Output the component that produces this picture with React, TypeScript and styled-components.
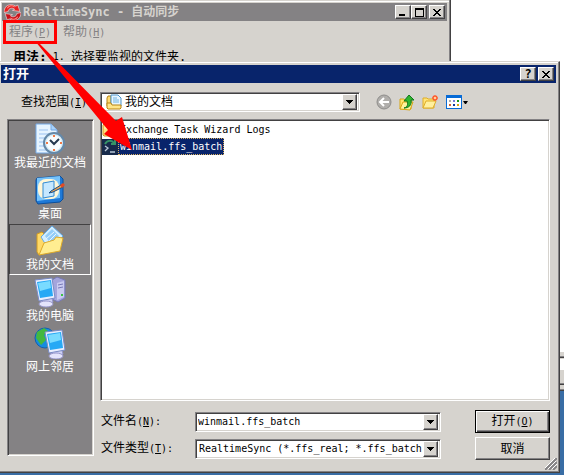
import React from "react";
import styled, { createGlobalStyle, css } from "styled-components";

const face = "#d6d3ce";
const navy = "#08246b";
const grey = "#848284";
const dark = "#424142";

const GlobalStyle = createGlobalStyle`
  * { box-sizing: border-box; }
  body {
    margin: 0;
    background: #fff;
    color: #000;
    font: 12px/16px "DejaVu Sans Mono", "Noto Sans CJK SC", monospace;
  }
  button, input, select {
    font: inherit;
    color: inherit;
    margin: 0;
    padding: 0;
    border: 0;
    border-radius: 0;
    background: none;
  }
`;

const raised = css`
  border: 1px solid;
  border-color: #fff ${dark} ${dark} #fff;
  box-shadow: inset -1px -1px 0 ${grey};
  background: ${face};
`;

const sunken = css`
  border: 1px solid;
  border-color: ${grey} #fff #fff ${grey};
  box-shadow: inset 1px 1px 0 ${dark}, inset -1px -1px 0 ${face};
  background: #fff;
`;

const Desktop = styled.div`
  position: relative;
  min-height: 100vh;
  padding: 61px 4px 2px 0;
  overflow: hidden;
  background: linear-gradient(#fff 391px, #396da5 391px);
`;

const BackPanes = styled.div`
  position: absolute;
  top: 352px;
  right: 0;
  width: 40px;
`;

const Pane = styled.div<{ $h: number; $fill: string }>`
  height: ${(p) => p.$h}px;
  background: ${(p) => p.$fill};
  border-top: 1px solid ${face};
  border-bottom: 1px solid ${dark};
  box-shadow: inset 0 -1px 0 ${grey};
`;

const MainWindow = styled.section`
  position: absolute;
  top: 0;
  left: 0;
  width: 80%;
  height: 120px;
  padding: 3px 3px 3px 2px;
  background: ${face};
  border-right: 1px solid ${dark};
  box-shadow: inset -1px 0 0 ${grey}, inset 0 1px 0 ${face}, inset 1px 2px 0 #fff;
`;

const Dialog = styled.section`
  position: relative;
  padding: 3px 3px 12px 1px;
  background: ${face};
  border: solid;
  border-width: 1px 1px 1px 0;
  border-color: ${face} ${dark} ${dark};
  box-shadow: inset -1px -1px 0 ${grey}, inset 0 1px 0 #fff;
`;

const TitleBar = styled.header<{ $active?: boolean }>`
  display: flex;
  align-items: center;
  gap: 2px;
  height: 18px;
  padding: 0 2px;
  background: ${(p) => (p.$active ? navy : grey)};
  color: ${(p) => (p.$active ? "#fff" : face)};
`;

const Title = styled.h1<{ $large?: boolean }>`
  flex: 1;
  margin: 0;
  font-size: ${(p) => (p.$large ? 13 : 12)}px;
  line-height: 18px;
  font-weight: bold;
  white-space: nowrap;
`;

const CaptionGroup = styled.div`
  display: flex;
`;

const CaptionButton = styled.button`
  ${raised}
  display: grid;
  place-items: center;
  width: 16px;
  height: 14px;
  line-height: 12px;
  color: #000;
`;

const MenuBar = styled.nav`
  display: flex;
  align-items: center;
  height: 22px;
  margin-left: 1px;
  color: ${grey};
`;

const MenuItem = styled.button<{ $marked?: boolean }>`
  height: 24px;
  padding: 0 3px;
  white-space: nowrap;
  border: 3px solid ${(p) => (p.$marked ? "#f00" : "transparent")};
`;

const Usage = styled.p`
  display: flex;
  gap: 6px;
  margin: 6px 0 0 11px;
  white-space: nowrap;
`;

const UsageTerm = styled.b`
  font-size: 13px;
`;

const Latin = styled.span`
  font-size: 10px;
`;

const LookInRow = styled.div`
  display: flex;
  align-items: center;
  padding: 9px 0 7px 20px;
`;

const LookInLabel = styled.label`
  width: 79px;
  line-height: 18px;
  white-space: nowrap;
`;

const Combo = styled.div<{ $fixed?: boolean }>`
  ${sunken}
  display: flex;
  align-items: center;
  height: 20px;
  padding: 2px;
  min-width: 0;
  ${(p) => (p.$fixed ? "flex: 0 1 260px; padding-left: 5px;" : "")}
`;

const Select = styled.select<{ $small?: boolean }>`
  appearance: none;
  flex: 1;
  min-width: 0;
  height: 16px;
  padding-left: ${(p) => (p.$small ? 1 : 3)}px;
  font-size: ${(p) => (p.$small ? 10 : 12)}px;
  line-height: 16px;
  outline: 0;
`;

const TextInput = styled.input`
  flex: 1;
  min-width: 0;
  height: 16px;
  font-size: 10px;
  outline: 0;
`;

const DropButton = styled.span`
  ${raised}
  display: grid;
  place-items: center;
  width: 15px;
  height: 16px;
  pointer-events: none;
`;

const Tools = styled.div`
  display: flex;
  align-items: center;
  gap: 7px;
  margin-left: 16px;
`;

const ToolButton = styled.button`
  display: flex;
  align-items: center;
  gap: 1px;
  height: 17px;
`;

const Content = styled.div`
  display: grid;
  grid-template-columns: 87px 1fr;
  gap: 6px;
  padding: 0 6px;
`;

const Places = styled.nav`
  ${sunken}
  background: ${grey};
  padding: 2px 2px 2px 1px;
  margin-bottom: 4px;
`;

const Place = styled.button<{ $selected?: boolean }>`
  display: flex;
  flex-direction: column;
  align-items: center;
  width: 100%;
  height: 51px;
  color: #fff;
  border: 1px solid transparent;
  ${(p) => p.$selected && `border-color: ${dark} #fff #fff ${dark};`}
`;

const Right = styled.div`
  display: flex;
  flex-direction: column;
  gap: 9px;
  min-width: 0;
`;

const FileList = styled.ul`
  ${sunken}
  list-style: none;
  height: 282px;
  margin: 0;
  padding: 1px;
`;

const FileRow = styled.li`
  display: flex;
  align-items: center;
  height: 17px;
`;

const FileButton = styled.button<{ $selected?: boolean }>`
  height: 17px;
  line-height: 14px;
  font-size: 10px;
  padding: 0 1px;
  border: 1px solid transparent;
  ${(p) => p.$selected && `background: ${navy}; color: #fff; border: 1px dotted #d8b060;`}
`;

const Fields = styled.form`
  display: grid;
  grid-template-columns: 90px minmax(0, 246px) minmax(75px, 1fr);
  align-items: center;
  row-gap: 4px;
  column-gap: 5px;
`;

const FieldLabel = styled.label`
  padding-left: 1px;
  white-space: nowrap;
`;

const PushButton = styled.button<{ $default?: boolean }>`
  ${raised}
  justify-self: end;
  width: 75px;
  height: 23px;
  ${(p) => p.$default && `border-color: #000; box-shadow: inset 1px 1px 0 #fff, inset -1px -1px 0 ${dark}, inset -2px -2px 0 ${grey};`}
`;

const Grip = styled.svg`
  position: absolute;
  right: 2px;
  bottom: 2px;
`;

const ArrowMark = styled.svg`
  position: absolute;
  top: 0;
  left: 0;
  pointer-events: none;
`;

const Key = ({ k }: { k: string }) => (
  <Latin>
    (<u>{k}</u>)
  </Latin>
);

const Down = () => (
  <svg width="7" height="4" shapeRendering="crispEdges">
    <path d="M0 0h7v1h-1v1h-1v1h-1v1h-1v-1h-1v-1h-1v-1h-1z" />
  </svg>
);

const CloseGlyph = () => (
  <svg width="8" height="7" shapeRendering="crispEdges">
    <path d="M0 0h2v1h1v1h2v-1h1v-1h2v1h-1v1h-1v1h-1v1h1v1h1v1h1v1h-2v-1h-1v-1h-2v1h-1v1h-2v-1h1v-1h1v-1h1v-1h-1v-1h-1v-1h-1z" />
  </svg>
);

const SyncLogo = () => (
  <svg width="17" height="17" viewBox="0 0 16 16">
    <path d="M0 8C0 1 6-1 11 2l2-1 2 6-7-1 2-1C8 3 4 4 4 7z" fill="#e62020" stroke="#fff" strokeWidth=".5" />
    <path d="M16 8c0 7-6 9-11 6l-2 1-2-6 7 1-2 1c2 2 6 1 6-2z" fill="#c81018" stroke="#fff" strokeWidth=".5" />
    <path d="M3 4c2-3 5-3 7-1M13 12c-2 3-5 3-7 1" fill="none" stroke="#ff8a80" />
  </svg>
);

const FolderDocIcon = () => (
  <svg width="16" height="16" viewBox="0 0 16 16">
    <path d="M1 4l1-2h3v10H1z" fill="#ffdb70" stroke="#b98414" />
    <path d="M5 1h7l3 3v8H5z" fill="#e7f5ff" stroke="#4a93c9" />
    <path d="M7 4h4M7 6h6M7 8h6" stroke="#70b4e3" />
    <path d="M1 9h4l1 2h9v3l-1 1H2l-1-1z" fill="#ffe58a" stroke="#b98414" />
  </svg>
);

const FolderIcon = () => (
  <svg width="16" height="16" viewBox="0 0 16 16">
    <path d="M1 3l1-1h4l2 2h6l1 1v8l-1 1H2l-1-1z" fill="#ffe07c" stroke="#c99720" />
    <path d="M2 6h12" stroke="#fff5bf" />
  </svg>
);

const BatchIcon = () => (
  <svg width="16" height="16" viewBox="0 0 16 16">
    <rect width="16" height="16" fill="#172a4b" />
    <path d="M3 5c2-4 7-4 9-1M13 1v4H9" fill="none" stroke="#359367" strokeWidth="2" />
    <path d="M3 7l3 2-3 3M8 13h5" fill="none" stroke="#b8c7d7" strokeWidth="1.3" />
  </svg>
);

const BackIcon = () => (
  <svg width="16" height="16" viewBox="0 0 16 16">
    <circle cx="8" cy="8" r="7" fill="#b0aeab" stroke="#8e8d8b" />
    <path d="M13 8H4M8 4L4 8l4 4" fill="none" stroke="#fff" strokeWidth="2" />
  </svg>
);

const UpIcon = () => (
  <svg width="16" height="17" viewBox="0 0 16 17">
    <path d="M1 5h4l1 1h6v9H1z" fill="#ffe56d" stroke="#d7a616" />
    <path d="M1 15l3-7h10l-3 8z" fill="#fff29c" stroke="#d7a616" />
    <path d="M5 14c4-1 4-4 3-7H5l5-6 5 5h-3c1 5-2 8-7 8z" fill="#2fb52f" stroke="#12761b" />
  </svg>
);

const NewFolderIcon = () => (
  <svg width="17" height="16" viewBox="0 0 17 16">
    <path d="M1 4h4l1 1h6v9H1z" fill="#ffe477" stroke="#dfad28" />
    <path d="M1 14l3-7h10l-3 7z" fill="#fff09e" stroke="#dfad28" />
    <path d="M13 1v6M10 4h6M11 2l4 4M15 2l-4 4" stroke="#ff5528" strokeWidth="1.4" />
    <circle cx="13" cy="4" r="1.3" fill="#ffd099" />
  </svg>
);

const ViewsIcon = () => (
  <svg width="16" height="14" shapeRendering="crispEdges">
    <rect x=".5" y=".5" width="15" height="13" rx="1" fill="#fff" stroke="#086bd6" />
    <path d="M1 0h14v3H1z" fill="#086bd6" />
    <path d="M3 5h2v2H3z" fill="#aaa" />
    <path d="M7 5h2v2H7z" fill="#7b79d6" />
    <path d="M11 5h2v2h-2z" fill="#189a18" />
    <path d="M3 9h2v2H3z" fill="#d66531" />
    <path d="M7 9h2v2H7z" fill="#10389c" />
    <path d="M11 9h2v2h-2z" fill="#d6a610" />
  </svg>
);

const RecentIcon = () => (
  <svg width="32" height="32" viewBox="0 0 32 32">
    <path d="M2 1h15l6 6v23H2z" fill="#e6f4ff" stroke="#74a9e6" />
    <path d="M17 1v6h6" fill="#a9d2fa" stroke="#74a9e6" />
    <path d="M5 7h9M5 11h14M5 15h10M5 19h6M5 23h6M5 27h8" stroke="#9bc2f1" />
    <circle cx="20" cy="20" r="10" fill="#d9edf7" stroke="#6488a8" strokeWidth="2" />
    <circle cx="20" cy="20" r="7.5" fill="#f8fdff" />
    <path d="M20 12v2M20 26v2M12 20h2M26 20h2" stroke="#f07945" strokeWidth="2" />
    <path d="M16 17l4 4 5-5" fill="none" stroke="#24384f" strokeWidth="2" />
  </svg>
);

const DesktopIcon = () => (
  <svg width="32" height="32" viewBox="0 0 32 32">
    <path d="M3 4l23-2 3 3v20l-3 3-22 2-2-3V6z" fill="#1e79d7" stroke="#0b4f9c" />
    <path d="M3 4l23-2v22L3 27z" fill="#77c3fa" />
    <rect x="4" y="5" width="21" height="20" rx="8" fill="#fff7d8" />
    <path d="M9 9l11-2v15l-11 2z" fill="#c5e8ff" stroke="#328bd2" />
    <path d="M17 17l10-6 2 2-10 5-4 1z" fill="#eaa454" stroke="#174e87" />
    <path d="M26 11l3-2 2 2-3 3z" fill="#e34a23" />
  </svg>
);

const DocumentsIcon = () => (
  <svg width="32" height="32" viewBox="0 0 32 32">
    <path d="M3 9l5-2 3 3 7-2v16L5 30l-2-3z" fill="#ffd967" stroke="#d39c20" />
    <path d="M7 12L18 1l11 10-14 14z" fill="#d4efff" stroke="#62abe9" />
    <path d="M11 11l7-7 7 7-8 8z" fill="#94cdf8" />
    <path d="M12 14l8-7M14 17l8-8" stroke="#e8f8ff" />
    <path d="M5 30l5-12 10-3 2-3 7 1-3 13z" fill="#ffed91" stroke="#dfaa29" />
  </svg>
);

const Monitor = () => (
  <>
    <path d="M10 20l8-1 2 7-7 4-6-2z" fill="#cfd2f4" stroke="#9395cb" />
    <path d="M2 4l17-2 3 20-16 3z" fill="#e9efff" stroke="#7a8bc5" />
    <path d="M4 6l14-2 2 16-13 2z" fill="#27a9f5" />
    <path d="M5 7l12-2 1 7-11 3z" fill="#79dbff" />
    <ellipse cx="13" cy="28" rx="7" ry="3" fill="#e4e4fb" stroke="#9999cd" />
  </>
);

const ComputerIcon = () => (
  <svg width="34" height="32" viewBox="0 0 34 32">
    <path d="M19 4l5-3 8 3v18l-7 4-6-3z" fill="#a4a5dc" stroke="#7779b5" />
    <path d="M24 7l7-2v16l-7 3z" fill="#c9caf0" />
    <path d="M25 9l5-1M25 12l5-1" stroke="#777ab7" />
    <path d="M28 19h2" stroke="#3ac343" strokeWidth="2" />
    <Monitor />
  </svg>
);

const NetworkIcon = () => (
  <svg width="32" height="32" viewBox="0 0 32 32">
    <circle cx="11" cy="11" r="10" fill="#168cdf" stroke="#1260ae" />
    <path d="M3 5l7-4 4 3-4 4 2 5-5 5-5-7z" fill="#43b83f" />
    <path d="M13 15l7-5v8l-7 3z" fill="#2d9838" />
    <g transform="translate(9 1)">
      <Monitor />
    </g>
  </svg>
);

const places = [
  { name: "我最近的文档", Icon: RecentIcon },
  { name: "桌面", Icon: DesktopIcon },
  { name: "我的文档", Icon: DocumentsIcon },
  { name: "我的电脑", Icon: ComputerIcon },
  { name: "网上邻居", Icon: NetworkIcon },
];

export default function App() {
  return (
    <Desktop>
      <GlobalStyle />
      <BackPanes>
        <Pane $h={6} $fill={face} />
        <Pane $h={27} $fill={`linear-gradient(#fff 11px, ${face} 11px)`} />
        <Pane $h={6} $fill={face} />
      </BackPanes>
      <MainWindow>
        <TitleBar>
          <SyncLogo />
          <Title>RealtimeSync - 自动同步</Title>
          <CaptionGroup>
            <CaptionButton aria-label="最小化">
              <svg width="8" height="8"><path d="M0 6h6v2H0z" /></svg>
            </CaptionButton>
            <CaptionButton aria-label="最大化">
              <svg width="9" height="9" shapeRendering="crispEdges">
                <path fillRule="evenodd" d="M0 0h9v9H0zM1 2v6h7V2z" />
              </svg>
            </CaptionButton>
          </CaptionGroup>
          <CaptionButton aria-label="关闭"><CloseGlyph /></CaptionButton>
        </TitleBar>
        <MenuBar>
          <MenuItem $marked>程序<Key k="P" /></MenuItem>
          <MenuItem>帮助<Key k="H" /></MenuItem>
        </MenuBar>
        <Usage>
          <UsageTerm>用法:</UsageTerm>
          <Latin>1.</Latin>
          <span>选择要监视的文件夹.</span>
        </Usage>
      </MainWindow>

      <Dialog role="dialog" aria-label="打开">
        <TitleBar $active>
          <Title as="h2" $large>打开</Title>
          <CaptionButton aria-label="帮助"><b>?</b></CaptionButton>
          <CaptionButton aria-label="关闭"><CloseGlyph /></CaptionButton>
        </TitleBar>
        <LookInRow>
          <LookInLabel htmlFor="look">查找范围<Key k="I" /></LookInLabel>
          <Combo $fixed>
            <FolderDocIcon />
            <Select id="look"><option>我的文档</option></Select>
            <DropButton><Down /></DropButton>
          </Combo>
          <Tools>
            <ToolButton aria-label="后退"><BackIcon /></ToolButton>
            <ToolButton aria-label="向上"><UpIcon /></ToolButton>
            <ToolButton aria-label="新建文件夹"><NewFolderIcon /></ToolButton>
            <ToolButton aria-label="查看">
              <ViewsIcon />
              <svg width="5" height="3"><path d="M0 0h5L3 3H2z" /></svg>
            </ToolButton>
          </Tools>
        </LookInRow>
        <Content>
          <Places>
            {places.map(({ name, Icon }) => (
              <Place key={name} $selected={name === "我的文档"}>
                <Icon />
                {name}
              </Place>
            ))}
          </Places>
          <Right>
            <FileList>
              <FileRow><FolderIcon /><FileButton>Exchange Task Wizard Logs</FileButton></FileRow>
              <FileRow><BatchIcon /><FileButton $selected>winmail.ffs_batch</FileButton></FileRow>
            </FileList>
            <Fields onSubmit={(e) => e.preventDefault()}>
              <FieldLabel htmlFor="name">文件名<Key k="N" /><Latin>:</Latin></FieldLabel>
              <Combo>
                <TextInput id="name" defaultValue="winmail.ffs_batch" />
                <DropButton><Down /></DropButton>
              </Combo>
              <PushButton $default>打开<Key k="O" /></PushButton>
              <FieldLabel htmlFor="type">文件类型<Key k="T" /><Latin>:</Latin></FieldLabel>
              <Combo>
                <Select id="type" $small><option>RealtimeSync (*.ffs_real; *.ffs_batch)</option></Select>
                <DropButton><Down /></DropButton>
              </Combo>
              <PushButton type="button">取消</PushButton>
            </Fields>
          </Right>
        </Content>
        <Grip width="12" height="12">
          <path d="M0 12L12 0M4 12l8-8M8 12l4-4" stroke={grey} strokeWidth="2" />
          <path d="M-1 11L11-1M3 11l8-8M7 11l5-5" stroke="#fff" />
        </Grip>
      </Dialog>
      <ArrowMark width="140" height="160" aria-hidden="true">
        <path d="M35 41H37L116 121 122 117 132 150 104 134 108 130z" fill="#f00" />
      </ArrowMark>
    </Desktop>
  );
}
